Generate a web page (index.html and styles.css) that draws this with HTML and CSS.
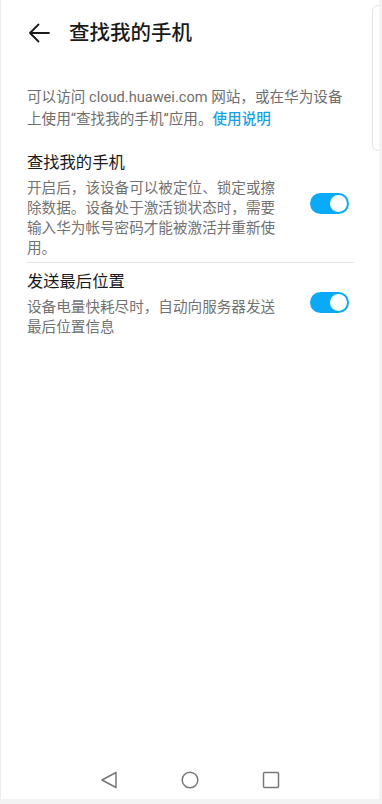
FILE: index.html
```html
<!DOCTYPE html>
<html lang="zh-CN">
<head>
<meta charset="utf-8">
<link rel="stylesheet" href="styles.css">
</head>
<body>
<div class="screen">
  <div class="edge-card"></div>
  <header class="header">
    <svg class="back" width="22" height="20" viewBox="0 0 22 20">
      <path d="M21 10H2M10.5 1.5L2 10l8.5 8.5" fill="none" stroke="#1a1a1a" stroke-width="1.8" stroke-linecap="round" stroke-linejoin="round"/>
    </svg>
    <h1 class="title">查找我的手机</h1>
  </header>
  <p class="intro">可以访问 cloud.huawei.com 网站，或在华为设备<br>上使用“查找我的手机”应用。<a class="link">使用说明</a></p>
  <div class="item first">
    <div class="texts">
      <div class="item-title">查找我的手机</div>
      <div class="item-desc">开启后，该设备可以被定位、锁定或擦除数据。设备处于激活锁状态时，需要输入华为帐号密码才能被激活并重新使用。</div>
    </div>
    <div class="switch"><span class="knob"></span></div>
  </div>
  <div class="divider"></div>
  <div class="item second">
    <div class="texts">
      <div class="item-title">发送最后位置</div>
      <div class="item-desc">设备电量快耗尽时，自动向服务器发送最后位置信息</div>
    </div>
    <div class="switch"><span class="knob"></span></div>
  </div>
  <div class="spacer"></div>
  <nav class="navbar">
    <svg width="18" height="18" viewBox="0 0 18 18"><path d="M16 1.5V16.5L2 9Z" fill="none" stroke="#777" stroke-width="1.5" stroke-linejoin="round"/></svg>
    <svg width="18" height="18" viewBox="0 0 18 18"><circle cx="9" cy="9" r="7.8" fill="none" stroke="#777" stroke-width="1.5"/></svg>
    <svg width="18" height="18" viewBox="0 0 18 18"><rect x="1.5" y="1.5" width="15" height="15" rx="1" fill="none" stroke="#777" stroke-width="1.5"/></svg>
  </nav>
</div>
</body>
</html>
```
FILE: styles.css
```css
html, body {
  margin: 0;
  padding: 0;
}
body {
  width: 382px;
  height: 804px;
  background: #f3f3f3;
  font-family: Roboto, "Noto Sans CJK SC", sans-serif;
  overflow: hidden;
  text-spacing-trim: space-all;
}
.screen {
  position: relative;
  width: 378px;
  height: 799px;
  background: #fff;
  border-left: 1px solid #ededed;
  display: flex;
  flex-direction: column;
  overflow: hidden;
}
.edge-card {
  position: absolute;
  left: 371px;
  top: 5px;
  width: 14px;
  height: 146px;
  border: 1px solid #e4e4e4;
  border-radius: 6px;
  box-sizing: border-box;
}
.header {
  height: 66px;
  display: flex;
  align-items: center;
  padding-left: 27px;
  box-sizing: border-box;
}
.back {
  display: block;
}
.title {
  margin: 0 0 0 19px;
  font-size: 20.5px;
  font-weight: 500;
  color: #1a1a1a;
  line-height: 28px;
}
.intro {
  margin: 20px 0 0 26px;
  font-size: 14.6px;
  line-height: 22px;
  color: #6e6e6e;
}
.link {
  color: #1a9fe6;
  font-weight: 500;
}
.item {
  display: flex;
  align-items: center;
  padding: 0 30px 0 26px;
}
.item.first {
  margin-top: 21px;
}
.item.second {
  margin-top: 7px;
}
.texts {
  width: 250px;
}
.item-title {
  font-size: 16.3px;
  line-height: 24px;
  color: #1a1a1a;
  font-weight: 400;
}
.item-desc {
  margin-top: 3px;
  font-size: 14.6px;
  line-height: 20px;
  color: #727272;
  line-break: strict;
}
.switch {
  margin-left: auto;
  width: 39px;
  height: 21px;
  border-radius: 11px;
  background: #0aaaf7;
  position: relative;
  flex: none;
  margin-bottom: 3px;
}
.knob {
  position: absolute;
  right: 2px;
  top: 2px;
  width: 17px;
  height: 17px;
  border-radius: 50%;
  background: #fff;
}
.divider {
  margin: 4px 25px 0 26px;
  height: 1px;
  background: #e6e6e6;
}
.spacer {
  flex: 1;
}
.navbar {
  height: 28px;
  display: flex;
  justify-content: center;
  align-items: flex-start;
  gap: 63px;
}
.navbar svg {
  display: block;
}
```
